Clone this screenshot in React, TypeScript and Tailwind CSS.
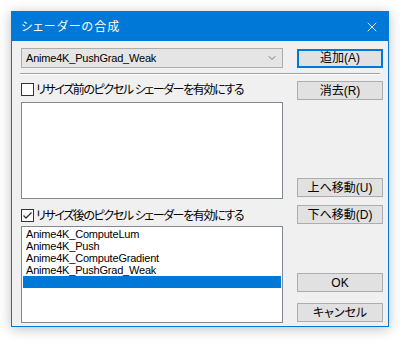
import { ChevronDown, X } from "lucide-react";

const font = { fontFamily: "'Liberation Sans', 'Noto Sans CJK JP', sans-serif" };

function Btn({ label, main = false }: { label: string; main?: boolean }) {
  return (
    <button
      className={
        "w-[86px] h-[19px] bg-[#e1e1e1] text-[12px] leading-none text-black flex items-center justify-center " +
        (main ? "border-2 border-[#0078d7]" : "border border-[#adadad]")
      }
    >
      {label}
    </button>
  );
}

function Check({ label, checked }: { label: string; checked: boolean }) {
  return (
    <label className="flex items-center h-[13px] gap-[2px] text-[12px] text-black whitespace-nowrap">
      <span className="w-[13px] h-[13px] border border-[#333] bg-white flex items-center justify-center shrink-0">
        {checked && (
          <svg width="11" height="11" viewBox="0 0 11 11">
            <path d="M1.5 5.5 L4 8 L9.5 2.5" stroke="#333" strokeWidth="1.3" fill="none" />
          </svg>
        )}
      </span>
      <span className="tracking-[-1.4px]">{label}</span>
    </label>
  );
}

const shaders = [
  "Anime4K_ComputeLum",
  "Anime4K_Push",
  "Anime4K_ComputeGradient",
  "Anime4K_PushGrad_Weak",
];

export default function App() {
  return (
    <div
      className="w-[400px] h-[342px] bg-white pt-[11px] pl-[11px] [font-feature-settings:'palt']"
      style={font}
    >
      <div className="w-[378px] h-[316px] border border-[#0078d7] bg-[#f0f0f0] flex flex-col shadow-[0_2px_12px_rgba(0,0,0,0.25)]">
        {/* title bar */}
        <div className="h-[29px] bg-[#0078d7] flex items-center justify-between pl-[9px] pr-[8px] shrink-0">
          <span className="text-white text-[12px] tracking-[1px]">シェーダーの合成</span>
          <X size={16} strokeWidth={1.3} className="text-white" />
        </div>

        <div className="flex flex-col pl-[9px] pr-[5px] pt-[7px]">
          <div className="flex items-center gap-[14px]">
            <div className="w-[262px] h-[20px] bg-[#e5e5e5] border border-[#acacac] flex items-center justify-between pl-[4px] pr-[4px]">
              <span className="text-[11px] tracking-[-0.2px] text-black">Anime4K_PushGrad_Weak</span>
              <ChevronDown size={12} strokeWidth={1.5} className="text-[#555]" />
            </div>
            <Btn label="追加(A)" main />
          </div>

          <div className="mt-[5px] ml-[-1px] w-[360px] border-t border-[#a0a0a0] border-b border-b-white" />

          <div className="flex gap-[14px] mt-[6px]">
            <div className="w-[262px] flex flex-col">
              <div className="pt-[2px]">
                <Check label="リサイズ前のピクセル シェーダーを有効にする" checked={false} />
              </div>
              <div className="mt-[6px] h-[97px] bg-white border border-[#828790]" />
              <div className="mt-[10px]">
                <Check label="リサイズ後のピクセル シェーダーを有効にする" checked />
              </div>
              <div className="mt-[4px] h-[97px] bg-white border border-[#828790] px-[1px] pt-[1px] flex flex-col">
                {shaders.map((s) => (
                  <div key={s} className="h-[12px] leading-[12px] text-[11px] tracking-[-0.2px] pl-[3px] text-black">
                    {s}
                  </div>
                ))}
                <div className="h-[12px] bg-[#0078d7]" />
              </div>
            </div>

            <div className="w-[86px] flex flex-col">
              <Btn label="消去(R)" />
              <div className="mt-[78px]">
                <Btn label="上へ移動(U)" />
              </div>
              <div className="mt-[8px]">
                <Btn label="下へ移動(D)" />
              </div>
              <div className="mt-[49px]">
                <Btn label="OK" />
              </div>
              <div className="mt-[11px]">
                <Btn label="キャンセル" />
              </div>
            </div>
          </div>
        </div>
      </div>
    </div>
  );
}
